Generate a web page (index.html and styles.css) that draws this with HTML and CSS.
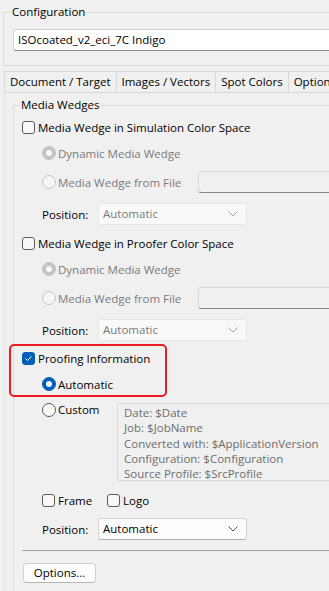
FILE: index.html
```html
<!DOCTYPE html>
<html lang="en">
<head>
    <meta charset="UTF-8">
    <meta name="viewport" content="width=device-width, initial-scale=1.0">
    <title>Proof Settings</title>
    <link rel="stylesheet" href="styles.css">
</head>
<body>
    <div class="window">
        <fieldset class="group config">
            <legend>Configuration</legend>
            <div class="textbox">ISOcoated_v2_eci_7C Indigo</div>
        </fieldset>

        <div class="tabs">
            <div class="tab active">Document / Target</div>
            <div class="tab">Images / Vectors</div>
            <div class="tab">Spot Colors</div>
            <div class="tab">Options</div>
        </div>

        <div class="tab-panel">
            <fieldset class="group wedges">
                <legend>Media Wedges</legend>

                <!-- simulation color space -->
                <div class="row top"><span class="cb"></span>Media Wedge in Simulation Color Space</div>
                <div class="row sub disabled"><span class="rb checked"></span>Dynamic Media Wedge</div>
                <div class="row sub field disabled">
                    <span class="rb"></span><span class="file-label">Media Wedge from File</span>
                    <div class="filebox"></div>
                </div>
                <div class="row sub field">
                    <span class="pos-label">Position:</span>
                    <div class="combo disabled">Automatic
                        <svg class="chev" width="10" height="6" viewBox="0 0 10 6"><path d="M0.5 0.5 L5 5 L9.5 0.5" fill="none" stroke="#a8a8a8" stroke-width="1"/></svg>
                    </div>
                </div>

                <!-- proofer color space -->
                <div class="row top next"><span class="cb"></span>Media Wedge in Proofer Color Space</div>
                <div class="row sub disabled"><span class="rb checked"></span>Dynamic Media Wedge</div>
                <div class="row sub field disabled">
                    <span class="rb"></span><span class="file-label">Media Wedge from File</span>
                    <div class="filebox"></div>
                </div>
                <div class="row sub field">
                    <span class="pos-label">Position:</span>
                    <div class="combo disabled">Automatic
                        <svg class="chev" width="10" height="6" viewBox="0 0 10 6"><path d="M0.5 0.5 L5 5 L9.5 0.5" fill="none" stroke="#a8a8a8" stroke-width="1"/></svg>
                    </div>
                </div>

                <!-- proofing information -->
                <div class="highlight">
                    <div class="row top">
                        <span class="cb checked">
                            <svg width="13" height="13" viewBox="0 0 13 13"><path d="M3.5 6.5 L5.5 8.5 L9.5 4.5" fill="none" stroke="#ffffff" stroke-width="1"/></svg>
                        </span>Proofing Information
                    </div>
                    <div class="row sub"><span class="rb selected"></span>Automatic</div>
                </div>
                <div class="row sub custom">
                    <span class="rb"></span><span class="custom-label">Custom</span>
                    <div class="memo">
                        <div>Date: $Date</div>
                        <div>Job: $JobName</div>
                        <div>Converted with: $ApplicationVersion</div>
                        <div>Configuration: $Configuration</div>
                        <div>Source Profile: $SrcProfile</div>
                    </div>
                </div>
                <div class="row sub">
                    <span class="cb"></span><span class="frame-label">Frame</span>
                    <span class="cb"></span>Logo
                </div>
                <div class="row sub field">
                    <span class="pos-label">Position:</span>
                    <div class="combo">Automatic
                        <svg class="chev" width="10" height="6" viewBox="0 0 10 6"><path d="M0.5 0.5 L5 5 L9.5 0.5" fill="none" stroke="#4a4a4a" stroke-width="1"/></svg>
                    </div>
                </div>

                <div class="separator"></div>
                <div class="button">Options...</div>
            </fieldset>
        </div>
    </div>
</body>
</html>
```

FILE: styles.css
```css
html, body {
    margin: 0;
    overflow: hidden;
    background: #f0f0f0;
}
body {
    font-family: 'Open Sans', 'Noto Sans', sans-serif;
    font-size: 11.5px;
    color: #000000;
    width: 329px;
    height: 591px;
}
.window {
    width: 329px;
    height: 591px;
    overflow: hidden;
    padding: 4px 0 0 3px;
    box-sizing: border-box;
}
.group {
    margin: 0;
    border: 1px solid #dcdcdc;
    min-width: 0;
}
.group legend {
    padding: 0 1px;
    margin-left: -2px;
    line-height: 16px;
}
.config {
    width: 420px;
    padding: 9px 0 14px 9px;
}
.textbox {
    height: 22px;
    box-sizing: border-box;
    background: #ffffff;
    border: 1px solid #d0d0d0;
    border-bottom-color: #8a8a8a;
    border-radius: 3px;
    padding-left: 4px;
    line-height: 20px;
}
.tabs {
    display: flex;
    width: 420px;
    margin: 5px 0 0 1px;
}
.tab {
    height: 20px;
    line-height: 20px;
    padding: 0 5px;
    border-top: 1px solid #d9d9d9;
    border-right: 1px solid #d9d9d9;
    white-space: nowrap;
}
.tab:first-child {
    border-left: 1px solid #d9d9d9;
}
.tab-panel {
    width: 420px;
    margin-left: 1px;
    border-top: 1px solid #d9d9d9;
    border-left: 1px solid #e3e3e3;
    padding: 4px 0 0 8px;
    height: 520px;
}
.wedges {
    padding: 7px 0 0 8px;
    display: flex;
    flex-direction: column;
    gap: 10px;
    height: 520px;
}
.row {
    display: flex;
    align-items: center;
    height: 16px;
    white-space: nowrap;
}
.row.top {
    height: 15px;
}
.row.next {
    margin-top: 1px;
}
.row.field {
    height: 22px;
}
.row.sub {
    padding-left: 20px;
}
.disabled {
    color: #7a7a7a;
}

/* checkbox and radio */
.cb {
    width: 13px;
    height: 13px;
    box-sizing: border-box;
    border: 1px solid #5c5c5c;
    border-radius: 3px;
    background: #f8f8f8;
    margin-right: 3px;
    flex: none;
    display: flex;
}
.cb.checked {
    background: #005fb8;
    border-color: #005fb8;
}
.cb.checked svg {
    margin: -1px;
}
.rb {
    width: 14px;
    height: 14px;
    box-sizing: border-box;
    border: 1px solid #5c5c5c;
    border-radius: 50%;
    background: #f8f8f8;
    margin-right: 2px;
    flex: none;
    position: relative;
}
.disabled .rb {
    border-color: #c4c4c4;
    background: #f5f5f5;
}
.disabled .rb.checked {
    background: #c4c4c4;
}
.rb.checked::after,
.rb.selected::after {
    content: "";
    position: absolute;
    left: 3px;
    top: 3px;
    width: 6px;
    height: 6px;
    border-radius: 50%;
    background: #f7f7f7;
}
.rb.selected {
    background: #005fb8;
    border-color: #005fb8;
}

.file-label {
    width: 140px;
}
.filebox {
    width: 200px;
    height: 22px;
    box-sizing: border-box;
    border: 1px solid #dadada;
    border-bottom-color: #858585;
    border-radius: 3px;
    background: #f0f0f0;
}
.pos-label {
    width: 56px;
}
.combo {
    width: 149px;
    height: 22px;
    box-sizing: border-box;
    border: 1px solid #d3d3d3;
    border-bottom-color: #b0b0b0;
    border-radius: 3px;
    background: #fdfdfd;
    padding: 0 8px 0 4px;
    line-height: 20px;
    display: flex;
    align-items: center;
    justify-content: space-between;
}
.combo.disabled {
    border-color: #e6e6e6;
    background: #f9f9f9;
}

.highlight {
    position: relative;
    display: flex;
    flex-direction: column;
    gap: 10px;
}
.highlight::after {
    content: "";
    position: absolute;
    left: -13px;
    top: -7px;
    bottom: -5px;
    width: 158px;
    border: 2px solid #ec1c24;
    border-radius: 5px;
    box-sizing: border-box;
}

.row.custom {
    height: 79px;
    margin-top: 1px;
    align-items: flex-start;
}
.custom-label {
    width: 59px;
    line-height: 14px;
}
.memo {
    width: 220px;
    height: 78px;
    box-sizing: border-box;
    border: 1px solid #dadada;
    border-radius: 2px;
    padding: 1px 0 0 6px;
    color: #6d6d6d;
    line-height: 15.25px;
}
.frame-label {
    width: 49px;
}

.separator {
    height: 1px;
    background: #a0a0a0;
    flex: none;
}
.button {
    margin: 2px 0 0 1px;
    width: 73px;
    height: 20px;
    box-sizing: border-box;
    border: 1px solid #d0d0d0;
    border-bottom-color: #b5b5b5;
    border-radius: 4px;
    background: #fdfdfd;
    line-height: 18px;
    text-align: center;
}
```
